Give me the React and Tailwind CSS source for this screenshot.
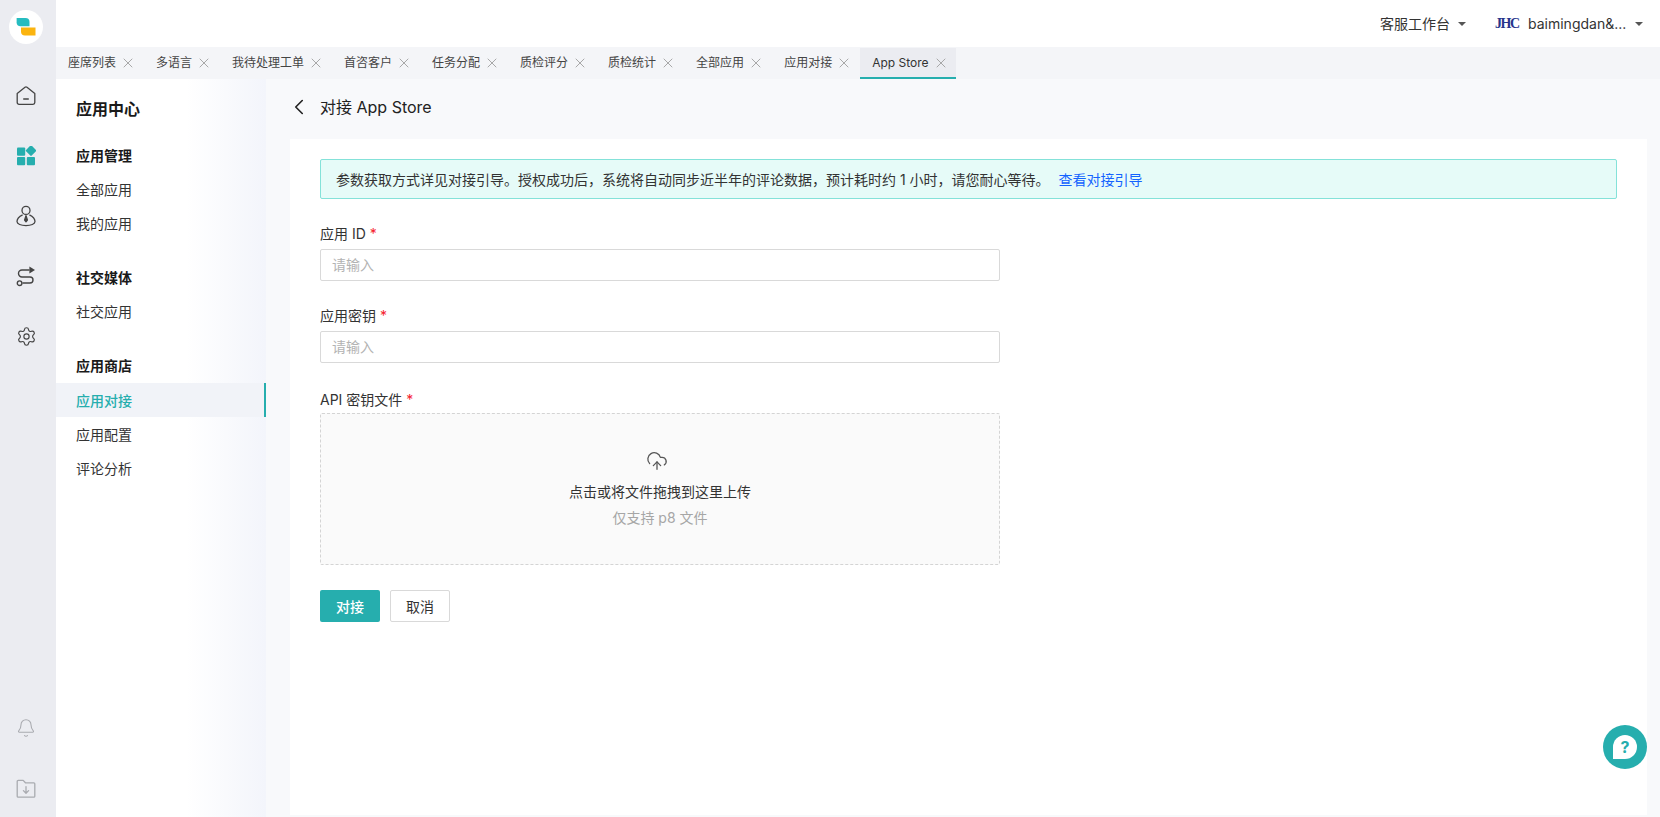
import React from "react";
import { X, ChevronLeft, Settings, Bell, CloudUpload } from "lucide-react";

const tabs = ["座席列表", "多语言", "我待处理工单", "首咨客户", "任务分配", "质检评分", "质检统计", "全部应用", "应用对接"];

function Caret() {
  return <span className="block w-0 h-0 border-x-[4px] border-x-transparent border-t-[4px] border-t-[#555]" />;
}

function HomeIcon() {
  return (
    <svg width="20" height="20" viewBox="0 0 20 20" fill="none" stroke="#444" strokeWidth="1.3" strokeLinejoin="round" strokeLinecap="round">
      <path d="M1.2 7.4 9 1.2a1.6 1.6 0 0 1 2 0l7.8 6.2v9.2a1.8 1.8 0 0 1-1.8 1.8H3a1.8 1.8 0 0 1-1.8-1.8z" />
      <path d="M7.8 13h4.4" strokeWidth="1.6" />
    </svg>
  );
}

function GridIcon() {
  return (
    <svg width="20" height="20" viewBox="0 0 20 20" fill="#26aeae">
      <rect x="1" y="1.6" width="8.2" height="8.2" rx="1" />
      <rect x="1" y="11" width="8.2" height="8.2" rx="1" />
      <rect x="10.8" y="11" width="8.2" height="8.2" rx="1" />
      <rect x="11" y="0.6" width="8" height="8" rx="1" transform="rotate(45 15 4.6)" />
    </svg>
  );
}

function UserIcon() {
  return (
    <svg width="20" height="22" viewBox="0 0 20 22" fill="none" stroke="#444" strokeWidth="1.3" strokeLinejoin="round">
      <circle cx="10" cy="5.4" r="4" />
      <path d="M6.6 9.8C3.4 11.4 1 14 1 16.6c0 2.4 4 4 9 4s9-1.6 9-4c0-2.6-2.4-5.2-5.6-6.8" />
      <path d="M10 10.6 8.6 15l1.4 1.8 1.4-1.8z" fill="#444" />
    </svg>
  );
}

function RouteIcon() {
  return (
    <svg width="20" height="21" viewBox="0 0 20 21" fill="none" stroke="#444" strokeWidth="1.4" strokeLinecap="round">
      <path d="M13 4H6a3.5 3.5 0 0 0 0 7h8a3 3 0 0 1 0 6H7" />
      <circle cx="3.6" cy="17.2" r="2.3" />
      <path d="M13.4 0.6v7L19 4.1z" fill="#444" stroke="none" />
    </svg>
  );
}

function FolderDownIcon() {
  return (
    <svg width="20" height="20" viewBox="0 0 20 20" fill="none" stroke="#a9abb0" strokeWidth="1.3" strokeLinecap="round" strokeLinejoin="round">
      <path d="M1.2 2.4a1 1 0 0 1 1-1h5l2.2 2.4h8.4a1 1 0 0 1 1 1v12.4a1 1 0 0 1-1 1H2.2a1 1 0 0 1-1-1z" />
      <path d="M10 7.6v6.4M7.4 11.6 10 14.2l2.6-2.6" />
    </svg>
  );
}

function Logo() {
  return (
    <svg width="20" height="20" viewBox="0 0 20 20">
      <path d="M0.6 1h8.9a4 4 0 0 1 4 4v4.2H4.6a4 4 0 0 1-4-4z" fill="#26bcc0" />
      <path d="M5 10.4h14.5v8H9a4 4 0 0 1-4-4z" fill="#fbb40f" />
    </svg>
  );
}

function NavItem({ children }) {
  return <div className="h-[60px] flex items-center justify-center">{children}</div>;
}

function SideLink({ children, active }) {
  return (
    <div className={active ? "h-[34px] pl-5 flex items-center text-[14px] text-[#26aeae] font-medium bg-[#f1f3f8] border-r-2 border-[#26aeae]" : "h-[34px] pl-5 flex items-center text-[14px] text-[#333]"}>
      {children}
    </div>
  );
}

function SideHead({ children }) {
  return <div className="h-[34px] pl-5 flex items-center text-[14px] font-semibold text-[#1a1a1a]">{children}</div>;
}

function Label({ children, last }) {
  return (
    <div className={last ? "h-[25px] text-[14px] text-[#333] flex items-start leading-[20px] pt-[2px]" : "h-[25px] text-[14px] text-[#333] flex items-start leading-[20px]"}>
      {children}
      <span className="text-[#f5222d] ml-1">*</span>
    </div>
  );
}

function Field({ label }) {
  return (
    <div className="mb-[25px]">
      <Label>{label}</Label>
      <div className="w-[680px] h-[32px] border border-[#d9d9d9] rounded-[2px] bg-white flex items-center px-[11px] pb-[1px] text-[14px] text-[#b3b3b3]">请输入</div>
    </div>
  );
}

export default function App() {
  return (
    <div className="relative w-[1660px] h-[817px] overflow-hidden flex bg-[#f8f9fb] text-[#333] font-['Inter','Noto_Sans_CJK_SC',sans-serif]">
      <aside className="w-14 shrink-0 bg-[#ebecf1] flex flex-col">
        <div className="mt-[10px] mb-[22px] mx-auto w-[34px] h-[34px] rounded-full bg-white flex items-center justify-center -translate-x-[2px]">
          <Logo />
        </div>
        <div className="-translate-x-[2px]">
          <NavItem><HomeIcon /></NavItem>
          <NavItem><GridIcon /></NavItem>
          <NavItem><UserIcon /></NavItem>
          <NavItem><RouteIcon /></NavItem>
          <NavItem><Settings size={21} strokeWidth={1.3} color="#444" /></NavItem>
        </div>
        <div className="mt-auto -translate-x-[2px]">
          <NavItem><Bell size={20} strokeWidth={1.3} color="#a9abb0" /></NavItem>
          <div className="h-[3px]" />
          <div className="h-[56px] flex items-center justify-center"><FolderDownIcon /></div>
        </div>
      </aside>

      <div className="flex-1 min-w-0 flex flex-col">
        <header className="h-[47px] shrink-0 bg-white flex items-center justify-end pr-[17px]">
          <span className="text-[14px] text-[#333]">客服工作台</span>
          <span className="ml-2"><Caret /></span>
          <span className="ml-[29px] w-[24px] text-[14px] font-bold leading-none tracking-[-1.5px] text-[#27358c] font-['Liberation_Serif',serif]">JHC</span>
          <span className="ml-[9px] w-[97px] text-[14px] text-[#333]">baimingdan&...</span>
          <span className="ml-[10px]"><Caret /></span>
        </header>

        <nav className="h-[32px] shrink-0 bg-[#f4f5f8] flex">
          {tabs.map((t) => (
            <div key={t} className="h-full pl-3 pr-[8px] flex items-center text-[12px] text-[#444]">
              <span>{t}</span>
              <X size={16} strokeWidth={1.3} color="#9b9b9b" className="ml-[4px]" />
            </div>
          ))}
          <div className="h-[31px] mt-[1px] w-[96px] pl-3 flex items-center text-[12px] text-[#333] bg-[#ebecf1] border-b-2 border-[#26aeae]">
            <span>App Store</span>
            <X size={16} strokeWidth={1.3} color="#9b9b9b" className="ml-[4px]" />
          </div>
        </nav>

        <div className="flex-1 min-h-0 flex">
          <div className="w-[210px] shrink-0 bg-gradient-to-r from-white from-[62%] to-[#f3f5fb]">
            <div className="h-[59px] pl-5 flex items-center text-[16px] font-semibold text-[#1a1a1a]">应用中心</div>
            <SideHead>应用管理</SideHead>
            <SideLink>全部应用</SideLink>
            <SideLink>我的应用</SideLink>
            <div className="h-[20px]" />
            <SideHead>社交媒体</SideHead>
            <SideLink>社交应用</SideLink>
            <div className="h-[20px]" />
            <SideHead>应用商店</SideHead>
            <div className="h-[1px]" />
            <SideLink active>应用对接</SideLink>
            <SideLink>应用配置</SideLink>
            <SideLink>评论分析</SideLink>
          </div>

          <main className="flex-1 min-w-0 pl-6 pr-[13px] pb-[2px] flex flex-col">
            <div className="h-[56px] mb-[4px] shrink-0 flex items-center">
              <ChevronLeft size={26} strokeWidth={1.5} color="#222" className="-ml-[4px]" />
              <span className="ml-[8px] text-[16px] text-[#222]">对接 App Store</span>
            </div>
            <section className="flex-1 bg-white pt-5 px-[30px]">
              <div className="h-[40px] bg-[#e6fbf8] border border-[#84e2d9] rounded-[2px] flex items-center pl-[15px] text-[14px] text-[#333]">
                <span>参数获取方式详见对接引导。授权成功后，系统将自动同步近半年的评论数据，预计耗时约 1 小时，请您耐心等待。</span>
                <span className="ml-[9px] text-[#1463ff]">查看对接引导</span>
              </div>
              <div className="h-[25px]" />
              <Field label="应用 ID" />
              <Field label="应用密钥" />
              <Label last>API 密钥文件</Label>
              <div className="w-[680px] h-[152px] border border-dashed border-[#d4d4d4] rounded-[2px] bg-[#fafafa] flex flex-col items-center pt-[36px]">
                <CloudUpload size={22} strokeWidth={1.4} color="#555" className="-ml-[6px]" />
                <div className="mt-[9px] text-[14px] leading-[22px] text-[#333]">点击或将文件拖拽到这里上传</div>
                <div className="mt-[4px] text-[14px] leading-[22px] text-[#a6a6a6]">仅支持 p8 文件</div>
              </div>
              <div className="mt-[25px] flex gap-[10px]">
                <button className="w-[60px] h-[32px] rounded-[2px] bg-[#26aeae] text-white font-medium text-[14px]">对接</button>
                <button className="w-[60px] h-[32px] rounded-[2px] bg-white border border-[#d9d9d9] text-[#333] text-[14px]">取消</button>
              </div>
            </section>
          </main>
        </div>
      </div>

      <div className="absolute left-[1603px] top-[725px] w-[44px] h-[44px] rounded-full bg-[#26aeae] flex items-center justify-center">
        <div className="relative w-[24px] h-[24px] rounded-full rounded-bl-none bg-white flex items-center justify-center text-[16px] font-bold leading-none text-[#26aeae]">?</div>
      </div>
    </div>
  );
}
